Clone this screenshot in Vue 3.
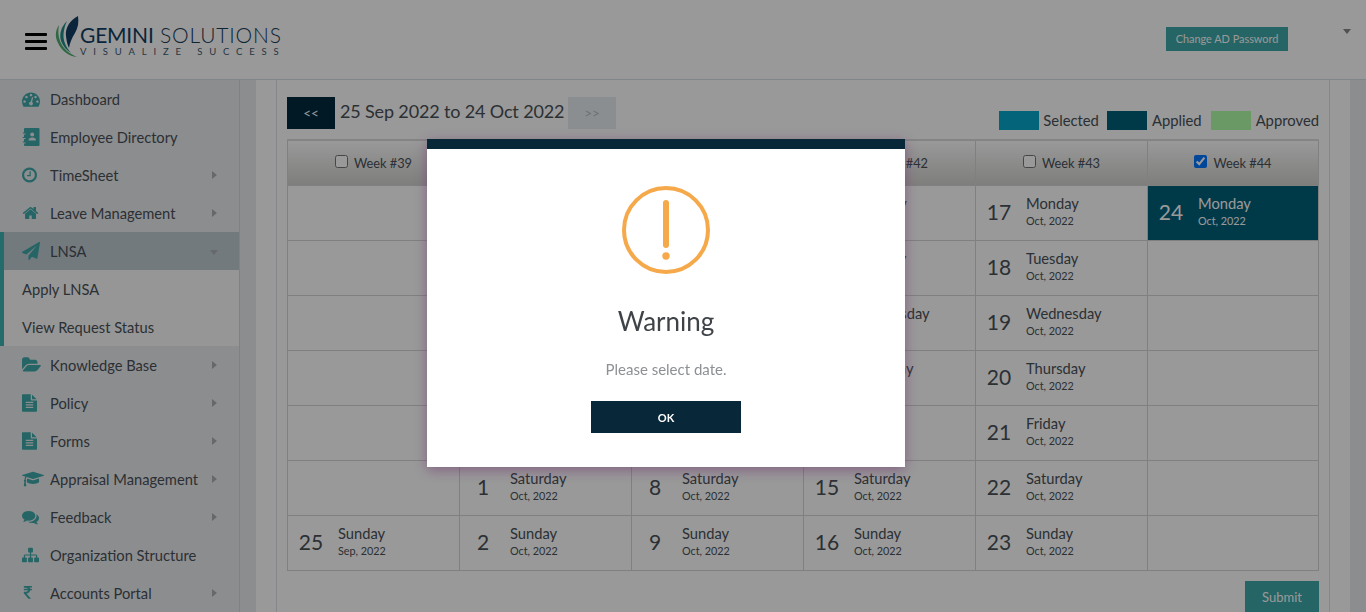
<template>
  <div class="page">
    <header class="topbar">
      <div class="hamburger"><span></span><span></span><span></span></div>
      <div class="logo">
        <svg class="feather" viewBox="55 15 25 43">
          <path fill="#4fae6f" d="M59 25C55 31 55 37 58 43c3 7 10 13 19 14-7-3-14-8-17-16-2-5-2-11-1-16z"/>
          <path fill="#1f8d8c" d="M67 21c-6 6-8 13-6 20 2 5 5 9 10 12-5-6-8-12-7.500-19 .5-5 1.500-9 3.500-13z"/>
          <path fill="#123f63" d="M78 16c-8 4-13 12-12 20 .5 4 1 8 3 12 1-6 3-10 6-15 3-5 4-11 3-17z"/>
        </svg>
        <div class="logo-text">
          <div class="logo-name"><b>GEMINI</b> SOLUTIONS</div>
          <div class="logo-tag">VISUALIZE SUCCESS</div>
        </div>
      </div>
      <button class="ad-btn">Change AD Password</button>
      <span class="user-caret"></span>
    </header>

    <div class="body">
      <aside class="sidebar">
        <template v-for="item in menu" :key="item.label">
          <div class="menu-item" :class="{ active: item.open }">
            <span class="menu-icon">
              <svg :viewBox="item.box || '0 0 1792 1792'" :style="{ width: item.w + 'px' }"><path :d="item.d" /></svg>
            </span>
            <span class="menu-label">{{ item.label }}</span>
            <span v-if="item.arrow" class="arrow" :class="{ down: item.open }"></span>
          </div>
          <div v-if="item.open" class="submenu">
            <div v-for="s in item.children" :key="s" class="sub-item">{{ s }}</div>
          </div>
        </template>
      </aside>

      <main class="main">
        <section class="card">
          <div class="toolbar">
            <button class="nav-btn">&lt;&lt;</button>
            <span class="range">25 Sep 2022 to 24 Oct 2022</span>
            <button class="nav-btn disabled">&gt;&gt;</button>
            <div class="legend">
              <i class="swatch selected"></i><span class="first">Selected</span>
              <i class="swatch applied"></i><span>Applied</span>
              <i class="swatch approved"></i><span>Approved</span>
            </div>
          </div>

          <table class="calendar">
            <thead>
              <tr>
                <th v-for="w in weeks" :key="w">
                  <label><input type="checkbox" :checked="w === 44" /> Week #{{ w }}</label>
                </th>
              </tr>
            </thead>
            <tbody>
              <tr v-for="(row, r) in rows" :key="r">
                <td v-for="(c, i) in row" :key="i" :class="{ picked: c && c.num === 24 && c.month === 'Oct' }">
                  <div v-if="c" class="cell">
                    <span class="num">{{ c.num }}</span>
                    <span class="info">
                      <span class="day">{{ c.day }}</span>
                      <span class="month">{{ c.month }}, 2022</span>
                    </span>
                  </div>
                </td>
              </tr>
            </tbody>
          </table>

          <div class="actions"><button class="submit">Submit</button></div>
        </section>
      </main>
    </div>

    <div class="overlay">
      <div class="modal">
        <div class="modal-top"></div>
        <svg class="warn" viewBox="0 0 88 88">
          <circle cx="44" cy="44" r="42" fill="none" stroke="#f5a94a" stroke-width="4" />
          <rect x="41" y="14" width="6" height="48" rx="3" fill="#f5a94a" />
          <circle cx="44" cy="70" r="3.700" fill="#f5a94a" />
        </svg>
        <h2 class="modal-title">Warning</h2>
        <p class="modal-text">Please select date.</p>
        <button class="ok">OK</button>
      </div>
    </div>
  </div>
</template>

<script setup>
const weeks = [39, 40, 41, 42, 43, 44]
const dayNames = ['Monday', 'Tuesday', 'Wednesday', 'Thursday', 'Friday', 'Saturday', 'Sunday']

// 25 Sep 2022 is a Sunday, so the first week holds only its last row
const rows = dayNames.map(() => weeks.map(() => null))
let col = 0
let slot = 6
for (let n = 0; n < 30; n++) {
  const inSep = n < 6
  rows[slot][col] = {
    num: inSep ? 25 + n : n - 5,
    day: dayNames[slot],
    month: inSep ? 'Sep' : 'Oct'
  }
  slot++
  if (slot > 6) {
    slot = 0
    col++
  }
}

const fileD = 'M1596 476q14 14 28 36h-472v-472q22 14 36 28zm-476 164h544v1056q0 40-28 68t-68 28h-1344q-40 0-68-28t-28-68v-1600q0-40 28-68t68-28h800v544q0 40 28 68t68 28zm160 736v-64q0-14-9-23t-23-9h-704q-14 0-23 9t-9 23v64q0 14 9 23t23 9h704q14 0 23-9t9-23zm0-256v-64q0-14-9-23t-23-9h-704q-14 0-23 9t-9 23v64q0 14 9 23t23 9h704q14 0 23-9t9-23zm0-256v-64q0-14-9-23t-23-9h-704q-14 0-23 9t-9 23v64q0 14 9 23t23 9h704q14 0 23-9t9-23z'

const menu = [
  { label: 'Dashboard', w: 18, d: 'M384 1152q0-53-37.500-90.500t-90.500-37.500-90.500 37.500-37.500 90.500 37.500 90.500 90.500 37.500 90.500-37.500 37.500-90.500zm192-448q0-53-37.500-90.500t-90.500-37.500-90.500 37.500-37.500 90.500 37.500 90.500 90.500 37.500 90.500-37.500 37.500-90.500zm428 481l101-382q6-26-7.500-48.500t-38.500-29.500-48 6.500-30 39.500l-101 382q-60 5-107 43.500t-63 98.500q-20 77 20 146t117 89 146-20 89-117q16-60-6-117t-72-91zm660-33q0-53-37.500-90.500t-90.500-37.500-90.500 37.500-37.500 90.500 37.500 90.500 90.500 37.500 90.500-37.500 37.500-90.500zm-640-640q0-53-37.500-90.500t-90.500-37.500-90.500 37.500-37.500 90.500 37.500 90.500 90.500 37.500 90.500-37.500 37.500-90.500zm448 192q0-53-37.500-90.500t-90.500-37.500-90.500 37.500-37.500 90.500 37.500 90.500 90.500 37.500 90.500-37.500 37.500-90.500zm320 448q0 261-141 483-19 29-54 29h-1402q-35 0-54-29-141-221-141-483 0-182 71-348t191-286 286-191 348-71 348 71 286 191 191 286 71 348z' },
  { label: 'Employee Directory', w: 18, box: '0 0 18 18', d: 'M3 0h13.500a1 1 0 0 1 1 1v16a1 1 0 0 1-1 1H3a1 1 0 0 1-1-1v-1.500h1.500v-1H.8v-1H2V11h1.500v-1H.8V9H2V6.500h1.500v-1H.8v-1H2V1a1 1 0 0 1 1-1zm7.200 4.500a2 2 0 1 0 0 4 2 2 0 0 0 0-4zM6.500 12.500h7.500c0-2-1.300-3-3.700-3s-3.800 1-3.800 3z' },
  { label: 'TimeSheet', w: 15, arrow: true, box: '128 128 1536 1536', d: 'M1024 544v448q0 14-9 23t-23 9h-320q-14 0-23-9t-9-23v-64q0-14 9-23t23-9h224v-352q0-14 9-23t23-9h64q14 0 23 9t9 23zm416 352q0-148-73-273t-198-198-273-73-273 73-198 198-73 273 73 273 198 198 273 73 273-73 198-198 73-273zm224 0q0 209-103 385.500t-279.500 279.500-385.500 103-385.500-103-279.500-279.500-103-385.500 103-385.500 279.500-279.500 385.500-103 385.500 103 279.500 279.500 103 385.500z' },
  { label: 'Leave Management', w: 17, arrow: true, d: 'M1472 992v480q0 26-19 45t-45 19h-384v-384h-256v384h-384q-26 0-45-19t-19-45v-480q0-1 .5-3t.5-3l575-474 575 474q1 2 1 6zm223-69l-62 74q-8 9-21 11h-3q-13 0-21-7l-692-577-692 577q-12 8-24 7-13-2-21-11l-62-74q-8-10-7-23.500t11-21.500l719-599q32-26 76-26t76 26l244 204v-195q0-14 9-23t23-9h192q14 0 23 9t9 23v408l219 182q10 8 11 21.500t-7 23.500z' },
  { label: 'LNSA', w: 18, arrow: true, open: true, children: ['Apply LNSA', 'View Request Status'], d: 'M1764 11q33 24 27 64l-256 1536q-5 29-32 45-14 8-31 8-11 0-24-5l-453-185-242 295q-18 23-49 23-13 0-22-4-19-7-30.500-23.500t-11.500-36.500v-349l864-1059-1069 925-395-162q-37-14-40-55-2-40 32-59l1664-960q15-9 32-9 20 0 36 11z' },
  { label: 'Knowledge Base', w: 19, arrow: true, box: '0 0 1880 1792', d: 'M1879 952q0 31-31 66l-336 396q-43 51-120.500 86.500t-143.500 35.500h-1088q-34 0-60.500-13t-26.500-43q0-31 31-66l336-396q43-51 120.500-86.500t143.500-35.500h1088q34 0 60.500 13t26.500 43zm-343-344v160h-832q-94 0-197 47.500t-164 119.500l-337 396-5 6q0-4-.5-12.500t-.5-12.500v-960q0-92 66-158t158-66h320q92 0 158 66t66 158v32h544q92 0 158 66t66 158z' },
  { label: 'Policy', w: 15, arrow: true, box: '128 0 1536 1792', d: fileD },
  { label: 'Forms', w: 15, arrow: true, box: '128 0 1536 1792', d: fileD },
  { label: 'Appraisal Management', w: 22, arrow: true, box: '0 0 2304 1792', d: 'M1774 836l18 316q4 69-82 128t-235 93.500-323 34.500-323-34.500-235-93.500-82-128l18-316 574 181q22 7 48 7t48-7zm530-324q0 23-22 31l-1120 352q-4 1-10 1t-10-1l-652-206q-43 34-71 111.500t-34 178.500q63 36 63 109 0 69-58 107l58 433q2 14-8 25-9 11-24 11h-192q-15 0-24-11-10-11-8-25l58-433q-58-38-58-107 0-73 65-111 11-207 98-330l-333-104q-22-8-22-31t22-31l1120-352q4-1 10-1t10 1l1120 352q22 8 22 31z' },
  { label: 'Feedback', w: 17, arrow: true, d: 'M1408 768q0 139-94 257t-256.500 186.500-353.500 68.500q-86 0-176-16-124 88-278 128-36 9-86 16h-3q-11 0-20.500-8t-11.500-21q-1-3-1-6.500t.5-6.500 2-6l2.500-5 3.500-5.500 4-5 4.500-5 4-4.500q5-6 23-25t26-29.500 22.500-29 25-38.500 20.500-44q-124-72-195-177t-71-224q0-139 94-257t256.500-186.500 353.500-68.500 353.500 68.500 256.500 186.500 94 257zm384 256q0 120-71 224.500t-195 176.500q10 24 20.500 44t25 38.500 22.500 29 26 29.500 23 25q1 1 4 4.500t4.500 5 4 5 3.500 5.500l2.500 5 2 6 .5 6.500-1 6.500q-3 14-13 22t-22 7q-50-7-86-16-154-40-278-128-90 16-176 16-271 0-472-132 58 4 88 4 161 0 309-45t264-129q125-92 192-212t67-254q0-77-23-152 129 71 204 178t75 230z' },
  { label: 'Organization Structure', w: 17, d: 'M1792 1248v320q0 40-28 68t-68 28h-320q-40 0-68-28t-28-68v-320q0-40 28-68t68-28h96v-192h-512v192h96q40 0 68 28t28 68v320q0 40-28 68t-68 28h-320q-40 0-68-28t-28-68v-320q0-40 28-68t68-28h96v-192h-512v192h96q40 0 68 28t28 68v320q0 40-28 68t-68 28h-320q-40 0-68-28t-28-68v-320q0-40 28-68t68-28h96v-192q0-52 38-90t90-38h512v-192h-96q-40 0-68-28t-28-68v-320q0-40 28-68t68-28h320q40 0 68 28t28 68v320q0 40-28 68t-68 28h-96v192h512q52 0 90 38t38 90v192h96q40 0 68 28t28 68z' },
  { label: 'Accounts Portal', w: 10, arrow: true, box: '250 0 1100 1792', d: 'M1345 470v102q0 14-9 23t-23 9h-168q-23 144-129 234t-276 110q167 178 459 536 14 16 4 34-8 18-29 18h-195q-16 0-25-12-306-367-498-571-9-9-9-22v-127q0-13 9.500-22.500t22.500-9.500h112q132 0 212.500-43t102.500-125h-427q-14 0-23-9t-9-23v-102q0-14 9-23t23-9h413q-57-113-268-113h-145q-13 0-22.500-9.500t-9.500-22.500v-133q0-14 9-23t23-9h832q14 0 23 9t9 23v102q0 14-9 23t-23 9h-233q47 61 64 144h171q14 0 23 9t9 23z' }
]
</script>

<style>
html, body {
  margin: 0;
  height: 100%;
  overflow: hidden;
  background: #fff;
}
</style>

<style scoped>
.page {
  height: 612px;
  overflow: hidden;
  font-family: Lato, "Open Sans", sans-serif;
  color: #495057;
  display: flex;
  flex-direction: column;
}

.topbar {
  flex: 0 0 80px;
  box-sizing: border-box;
  border-bottom: 1px solid #d3e0e6;
  display: flex;
  align-items: center;
  padding-left: 25px;
  position: relative;
}

.hamburger {
  width: 22px;
  height: 17px;
  display: flex;
  flex-direction: column;
  justify-content: space-between;
  margin-top: 4px;
}

.hamburger span {
  display: block;
  height: 3px;
  background: #000;
  border-radius: 1px;
}

.logo {
  display: flex;
  align-items: flex-start;
  margin-left: 8px;
  margin-top: -6px;
}

.feather {
  width: 25px;
  height: 43px;
}

.logo-text {
  padding-top: 10px;
}

.logo-name {
  font-size: 21px;
  line-height: 20px;
  font-weight: 300;
  color: #173c56;
  letter-spacing: 0.800px;
  white-space: nowrap;
}

.logo-name b {
  font-weight: 400;
  color: #123f63;
  letter-spacing: -0.200px;
}

.logo-tag {
  font-size: 9.500px;
  line-height: 10px;
  letter-spacing: 6.850px;
  margin-top: 2px;
  color: #3e5a6e;
  white-space: nowrap;
}

.ad-btn {
  margin-left: auto;
  margin-right: 78px;
  margin-top: -2px;
  width: 122px;
  height: 24px;
  border: 0;
  padding: 0;
  background: #3ea8a8;
  color: #fff;
  font-family: inherit;
  font-size: 10.900px;
}

.user-caret {
  position: absolute;
  top: 29px;
  left: 1343px;
  border: 4px solid transparent;
  border-top: 5px solid #888;
}

.body {
  flex: 1;
  display: flex;
  background: #e9ecef;
  min-height: 0;
}

.sidebar {
  flex: 0 0 240px;
  box-sizing: border-box;
  border-right: 1px solid #d4d8dc;
  font-size: 14.700px;
}

.menu-item {
  height: 38px;
  display: flex;
  align-items: center;
  position: relative;
  padding-left: 50px;
}

.menu-label {
  margin-top: -1px;
}

.menu-item.active {
  background: #c0cbd2;
  box-shadow: inset 4px 0 0 #3cb4b4;
}

.menu-icon {
  position: absolute;
  left: 22px;
  top: 0;
  height: 38px;
  display: flex;
  align-items: center;
}

.menu-icon svg {
  height: 18px;
  display: block;
  fill: #3ea8a8;
}

.arrow {
  position: absolute;
  left: 212px;
  top: 15px;
  border: 4px solid transparent;
  border-left: 5px solid #aab0b5;
}

.arrow.down {
  left: 210px;
  top: 18px;
  border: 4px solid transparent;
  border-top: 5px solid #aab0b5;
}

.submenu {
  background: #fafafa;
  box-shadow: inset 4px 0 0 #3cb4b4;
}

.sub-item {
  height: 38px;
  box-sizing: border-box;
  padding: 0 0 1px 22px;
  display: flex;
  align-items: center;
}

.main {
  margin-left: 16px;
  width: 1094px;
  flex: none;
  background: #fff;
  padding: 0 20px;
  box-sizing: border-box;
}

.card {
  height: 100%;
  box-sizing: border-box;
  border-left: 1px solid #dee2e6;
  border-right: 1px solid #dee2e6;
  padding: 17px 10px 0;
  width: 1054px;
}

.toolbar {
  display: flex;
  align-items: flex-start;
  height: 42px;
}

.nav-btn {
  width: 48px;
  height: 32px;
  border: 0;
  padding: 0;
  background: #032b3f;
  color: #fff;
  font-family: inherit;
  font-size: 13.500px;
}

.nav-btn.disabled {
  background: #e6edf0;
  color: #b4bcc4;
}

.range {
  font-size: 18px;
  line-height: 29px;
  letter-spacing: -0.150px;
  width: 233px;
  padding-left: 5px;
  box-sizing: border-box;
  white-space: nowrap;
}

.legend {
  margin-left: auto;
  display: flex;
  align-items: center;
  font-size: 14.800px;
  margin-top: 14px;
  height: 19px;
}

.swatch {
  width: 40px;
  height: 19px;
  margin-right: 5px;
}

.legend span {
  margin-right: 9px;
  margin-top: -1px;
}

.legend span.first {
  margin-right: 8px;
}

.legend span:last-child {
  margin-right: 0;
}

.swatch.selected { background: #08a8cb; margin-right: 4px; }
.swatch.applied { background: #00617b; }
.swatch.approved { background: #b1ffaa; }

.calendar {
  border-collapse: collapse;
  table-layout: fixed;
  width: 1032px;
  border-top: 2px solid #dcdcdc;
}

.calendar th,
.calendar td {
  border: 1px solid #d5d5d5;
  padding: 0;
}

.calendar th {
  width: 172px;
  height: 45px;
  box-sizing: border-box;
  font-weight: 400;
  font-size: 12.800px;
  background: linear-gradient(#fff, #d2d2cf);
}

.calendar th:last-child {
  width: 171px;
}

.calendar th label {
  display: inline-flex;
  align-items: center;
  gap: 6px;
}

.calendar th input {
  margin: 0;
  margin-top: -3px;
  width: 13px;
  height: 13px;
}

.calendar td {
  height: 55px;
  box-sizing: border-box;
}

.cell {
  display: flex;
  align-items: center;
}

.num {
  width: 48px;
  flex: none;
  text-align: center;
  font-size: 21px;
  margin: -2px 3px 0 -1px;
}

.info {
  display: flex;
  flex-direction: column;
  margin-top: -4px;
}

.day {
  font-size: 14.700px;
  line-height: 20px;
}

.month {
  font-size: 10.800px;
  line-height: 16px;
}

td.picked {
  background: #00617b;
  color: #fff;
}

.actions {
  display: flex;
  justify-content: flex-end;
  width: 1032px;
  margin-top: 10px;
}

.submit {
  width: 74px;
  height: 32px;
  border: 0;
  padding: 0;
  background: #3ea8a8;
  color: #fff;
  font-family: inherit;
  font-size: 13px;
}

.overlay {
  position: fixed;
  inset: 0;
  background: rgba(0, 0, 0, 0.4);
}

.modal {
  position: absolute;
  left: 427px;
  top: 139px;
  width: 478px;
  height: 328px;
  background: #fff;
  box-shadow: 0 3px 12px rgba(110, 50, 110, 0.55);
  display: flex;
  flex-direction: column;
  align-items: center;
}

.modal-top {
  align-self: stretch;
  height: 10px;
  background: #082739;
}

.warn {
  width: 88px;
  height: 88px;
  margin-top: 37px;
}

.modal-title {
  margin: 29px 0 0;
  font-size: 26px;
  line-height: 36px;
  font-weight: 400;
  color: #3f4347;
}

.modal-text {
  margin: 20px 0 0;
  font-size: 15px;
  line-height: 20px;
  color: #8d9094;
}

.ok {
  margin-top: 22px;
  width: 150px;
  height: 32px;
  border: 0;
  padding: 0;
  background: #082739;
  color: #fff;
  font-family: inherit;
  font-size: 11px;
  font-weight: 700;
}
</style>
